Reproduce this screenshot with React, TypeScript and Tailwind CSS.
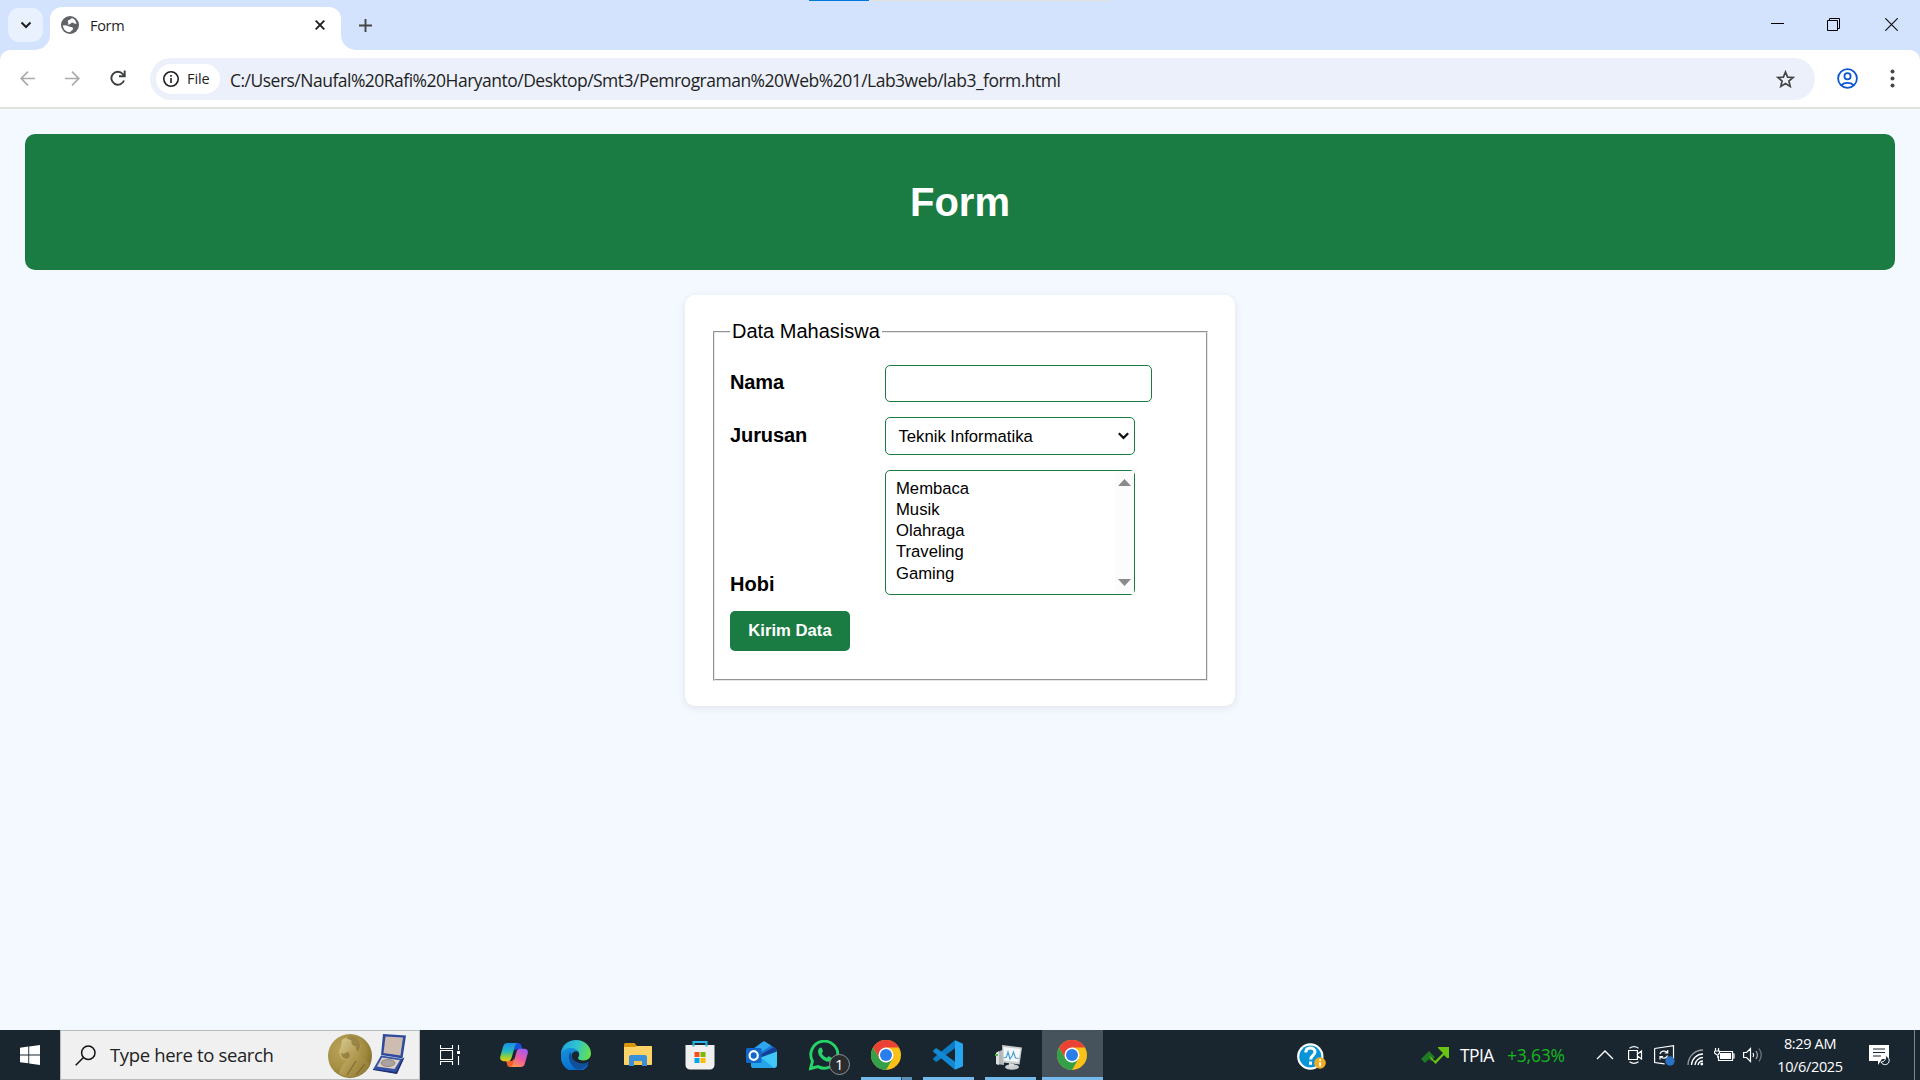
import type { ReactNode } from "react";

const hobbies = ["Membaca", "Musik", "Olahraga", "Traveling", "Gaming"];

function Globe() {
  return (
    <svg width="18" height="18" viewBox="0 0 18 18">
      <circle cx="9" cy="9" r="9" fill="#5f6368" />
      <path d="M2 9.300c1.800-.2 3.200-.1 4.500.5 1.400.6 2.200 1.300 3.400 1.200 1.500-.1 2.300.7 2.100 1.900-.2 1.300-1.300 1.400-2.200 2.300-.5.500-.8.900-1 1.100C5 16.200 2 13.200 2 9.300zM10.800 2.100c-.9.900-1.400 1.600-2.700 1.800-1.500.3-1.600 1.300-1 2.300.6 1 .3 1.700-.7 1.700 1.400 1 3 .6 3.600-.6.500-.9 1.500-.9 2.400-.2.700.6 1.700.9 3.200.6-.7-2.800-2.300-4.900-4.800-5.600z" fill="#fff" />
    </svg>
  );
}

function ChromeLogo() {
  return (
    <svg width="30" height="30" viewBox="0 0 30 30">
      <circle cx="15" cy="15" r="15" fill="#fbc116" />
      <path d="M2 7.500A15 15 0 0 1 28 7.500H15L8.500 18.750z" fill="#ea4335" />
      <path d="M2 7.500 8.500 18.750 15 22.500 21.500 18.750 15 30A15 15 0 0 1 2 7.500z" fill="#34a04a" />
      <circle cx="15" cy="15" r="7.500" fill="#fff" />
      <circle cx="15" cy="15" r="6" fill="#2b7de9" />
    </svg>
  );
}

function Copilot() {
  return (
    <svg width="28" height="26" viewBox="0 0 28 26">
      <defs>
        <linearGradient id="cpA" x1="0" y1="0" x2="0" y2="1">
          <stop offset="0" stopColor="#1c8fe8" />
          <stop offset="0.45" stopColor="#22b8c0" />
          <stop offset="0.75" stopColor="#8fcf3c" />
          <stop offset="1" stopColor="#f5c518" />
        </linearGradient>
        <linearGradient id="cpB" x1="0.7" y1="0" x2="0.2" y2="1">
          <stop offset="0" stopColor="#a55cf0" />
          <stop offset="0.5" stopColor="#ee5aa0" />
          <stop offset="1" stopColor="#ff9a4a" />
        </linearGradient>
      </defs>
      <path d="M14 1h4c2 0 3 1 3.500 3l1 3h-5c-1.500 0-2.500 1-3 2.500z" fill="#1b4fd8" />
      <path d="M14 25h-4c-2 0-2.700-1-3-3l-.8-3H11c1.500 0 2.500-1 3-2.500z" fill="#f4602c" />
      <path d="M7.500 1H18c-1.600 0-2.400 1.200-3 3l-3.500 12c-.6 2-1.500 3.200-3.500 3.200H3.500C.8 19.200-.4 17 .3 14.500L3.200 4.300C3.800 2.200 5.300 1 7.500 1z" fill="url(#cpA)" />
      <path d="M20.500 25H10c1.600 0 2.400-1.200 3-3l3.500-12c.6-2 1.500-3.200 3.500-3.200h4.500c2.700 0 3.900 2.200 3.200 4.700l-2.900 10.200c-.6 2.100-2.100 3.300-4.300 3.300z" fill="url(#cpB)" />
    </svg>
  );
}

function Edge() {
  return (
    <svg width="30" height="30" viewBox="0 0 30 30">
      <defs>
        <linearGradient id="egA" x1="0" y1="0.3" x2="1" y2="0.5">
          <stop offset="0" stopColor="#1fa5e0" />
          <stop offset="0.5" stopColor="#30c4d0" />
          <stop offset="1" stopColor="#66e04c" />
        </linearGradient>
        <linearGradient id="egB" x1="0" y1="0" x2="0.4" y2="1">
          <stop offset="0" stopColor="#1795dc" />
          <stop offset="1" stopColor="#0a6cd0" />
        </linearGradient>
      </defs>
      <path d="M0 13c0-3 4-6 9-6 4 0 7 2 8 5l-5 4c0 5 6 8 12 8l3.500 1A15 15 0 0 1 0 15z" fill="url(#egB)" />
      <path d="M9.500 11.500C7.500 14 7.500 18 9 22c2 4 5.500 7.500 8.500 7.800 4.300-.6 8-3.300 10-6.800.6-1-.1-1.500-.9-1-2 1-4 1.500-6.200 1.500C15 23.500 11 19 9.500 11.500z" fill="#104f99" />
      <path d="M10.800 15.500c0-2 1.400-4 4-4.200 2 .2 3.400 1.400 3.400 3.100 0 1.600-1.200 2.600-1.200 3.600 0 1.200 2 2.500 5.500 2.500 2 0 3.700-.6 5-1.600l-1 3c-2 .9-4 1.400-6 1.300-5.700-.2-9.700-3.700-9.700-7.700z" fill="#192630" />
      <path d="M0 13C1 5 7 0 15 0c8.500 0 15 6 15 13.500 0 4-3 7-7.500 7-3.500 0-5.500-1.300-5.500-2.500 0-.8 1.200-1.400 1.200-3.600C18.200 11 14.500 8 10 8 5.500 8 1.500 10 0 13z" fill="url(#egA)" />
    </svg>
  );
}

function Folder() {
  return (
    <svg width="28" height="24" viewBox="0 0 28 24">
      <path d="M0 1.500C0 .7.700 0 1.500 0h9l2.500 3v5H0z" fill="#d99408" />
      <path d="M0 4h11l2-1h14c.6 0 1 .4 1 1v17c0 .6-.4 1-1 1H1c-.6 0-1-.4-1-1z" fill="#fdd266" />
      <path d="M5 23V14c0-1.100.9-2 2-2h14c1.100 0 2 .9 2 2v9h-5v-5h-8v5z" fill="#3a8fd9" />
      <path d="M10 18h8v4h-8z" fill="#fbc94a" />
    </svg>
  );
}

function Store() {
  return (
    <svg width="30" height="30" viewBox="0 0 30 30">
      <path d="M.5 5h29v20a4.500 4.500 0 0 1-4.500 4.500H5A4.500 4.500 0 0 1 .5 25z" fill="#f0f0f0" />
      <path d="M8.500 6.500V2h13v4.500" fill="none" stroke="#29b4ee" strokeWidth="2" />
      <path d="M9.500 12h5v5h-5z" fill="#f25022" />
      <path d="M15.500 12h5v5h-5z" fill="#7fba00" />
      <path d="M9.500 18h5v5h-5z" fill="#00a4ef" />
      <path d="M15.500 18h5v5h-5z" fill="#ffb900" />
    </svg>
  );
}

function Outlook() {
  return (
    <svg width="31" height="28" viewBox="0 0 31 28">
      <path d="M5 9 16.500 1c.9-.6 2-.6 3 0L29 7c1.200.8 2 2 2 3v7L18 20 5 14z" fill="#1c78d4" />
      <path d="m8 8 8.500-7c.9-.6 2-.6 3 0L25 4.500 12 13z" fill="#2fa6ee" />
      <path d="m14 14 14-8c1.600.8 3 2.300 3 4.500L17 19z" fill="#123f98" />
      <path d="M5 20 31 10.500V24c0 1.700-1.300 3-3 3H8c-1.700 0-3-1.300-3-3z" fill="#3fc8f8" />
      <path d="M5 18h12l11 9H8c-1.700 0-3-1.300-3-3z" fill="#25a6ea" />
      <rect y="7" width="15.500" height="15" rx="1.500" fill="#1267cb" />
      <ellipse cx="7.700" cy="14.500" rx="4.100" ry="4.400" fill="none" stroke="#fff" strokeWidth="2.200" />
    </svg>
  );
}

function WhatsApp() {
  return (
    <svg width="42" height="36" viewBox="0 0 42 36">
      <path d="m1.500 28.500 2-7.300A13.500 13.500 0 1 1 9 26.600z" fill="none" stroke="#25d366" strokeWidth="2.900" />
      <path d="M10.500 8c.5-.6 1.800-.7 2.200.1l1.300 3c.2.600-1.300 1.900-1.100 2.400 1 2 2.600 3.400 4.800 4.300.6.100 1.600-1.700 2.200-1.500l3 1.500c.7.500-.1 2.700-1 3.300-1.600 1-4 .7-6-.3-3-1.500-5.500-4.200-6.500-7C8.700 11.500 9 9.300 10.500 8z" fill="#25d366" />
      <circle cx="30.500" cy="24.500" r="10" fill="#2a2d30" stroke="#8d9295" strokeWidth="1" />
      <text x="30.300" y="30" textAnchor="middle" fontSize="15" fill="#fff" fontFamily="Open Sans, sans-serif">1</text>
    </svg>
  );
}

function VsCode() {
  return (
    <svg width="30" height="30" viewBox="0 0 30 30">
      <path d="M22 .3v8L4 21.500c-.5.400-1 .4-1.500 0l-2-1.800c-.6-.5-.6-1.200 0-1.800z" fill="#0d7cc7" />
      <path d="M22 29.700v-8L4 8.500c-.5-.4-1-.4-1.500 0l-2 1.800c-.6.5-.6 1.200 0 1.800z" fill="#1389d4" />
      <path d="m22 .3 7 3c.6.300 1 .8 1 1.500v20.400c0 .7-.4 1.200-1 1.500l-7 3z" fill="#26a5f0" />
    </svg>
  );
}

function TaskManager() {
  return (
    <svg width="30" height="28" viewBox="0 0 30 28">
      <path d="m2 10 8-4v16l-8-1z" fill="#b4b7b8" />
      <path d="m2 10 3-2v14l-3-1z" fill="#dededc" />
      <path d="M1 11h3v2H1z" fill="#44bd3a" />
      <path d="m8 2 20 2.500-2.500 17L9 19.500z" fill="#c9cdcf" />
      <path d="m9.500 4 17 2-2.300 13L10 17.500z" fill="#f4f8fb" />
      <path d="m10 15 2.500-1 1.500-5 2 7 2-3 1.500-4 2 6 3 .5" fill="none" stroke="#4ba2d2" strokeWidth="1.200" />
      <ellipse cx="18" cy="24" rx="7" ry="2.800" fill="#c9cccd" />
      <path d="m15 20 5 .7v3h-5z" fill="#d8dadb" />
    </svg>
  );
}

function TaskSlot({ children, bar, active }: { children: ReactNode; bar?: "full" | "split"; active?: boolean }) {
  return (
    <div className={active ? "relative ml-px flex h-full w-[61px] items-center justify-center bg-[#47535c] pr-px" : "relative flex h-full w-[62px] items-center justify-center"}>
      {children}
      {bar === "full" && !active && <div className="absolute bottom-0 left-[6px] h-[3px] w-[51px] bg-[#76b9ed]" />}
      {bar === "split" && (
        <div className="absolute bottom-0 left-[6px] flex h-[3px] w-[51px]">
          <div className="w-10 bg-[#76b9ed]" />
          <div className="w-px bg-[#2c4a60]" />
          <div className="w-[10px] bg-[#5c8db4]" />
        </div>
      )}
      {active && <div className="absolute bottom-0 left-0 h-[3px] w-full bg-[#76b9ed]" />}
    </div>
  );
}

function TabStrip() {
  return (
    <div className="relative flex h-[50px] shrink-0 bg-[#d3e3fd]">
      <div className="absolute left-[809px] top-0 flex h-px w-[301px] bg-[#e3e3df]">
        <div className="w-[60px] bg-[#0078d7]" />
      </div>
      <div className="ml-2 mt-2 flex h-[34px] w-[35px] items-center justify-center rounded-[11px] bg-[#e9f0fe]">
        <svg width="12" height="8" viewBox="0 0 12 8" fill="none" stroke="#1f1f1f" strokeWidth="2"><path d="m1.500 1.500 4.500 4.500 4.500-4.500" /></svg>
      </div>
      <svg className="mt-auto ml-[-8px]" width="15" height="15" viewBox="0 0 15 15"><path d="M15 0v15H0A15 15 0 0 0 15 0z" fill="#fff" /></svg>
      <div className="mt-[7px] flex w-[291px] items-center rounded-t-[12px] bg-white pb-[7px] pl-[11px]">
        <Globe />
        <span className="ml-[11px] w-[226px] pt-px font-['Open_Sans'] text-[14.500px] tracking-[-0.300px] text-[#1f1f1f]">Form</span>
        <svg className="ml-[-1px]" width="10" height="10" viewBox="0 0 10 10" stroke="#1f1f1f" strokeWidth="1.900"><path d="m.7.7 8.600 8.600M9.300.7.7 9.300" /></svg>
      </div>
      <svg className="mt-auto" width="15" height="15" viewBox="0 0 15 15"><path d="M0 0v15h15A15 15 0 0 1 0 0z" fill="#fff" /></svg>
      <svg className="ml-[3px] mt-[19px]" width="13" height="13" viewBox="0 0 13 13" stroke="#444746" strokeWidth="1.900"><path d="M6.500 0v13M0 6.500h13" /></svg>
      <div className="ml-auto flex pt-[18px] pr-[22px]">
        <svg width="13" height="13" viewBox="0 0 13 13" stroke="#000"><path d="M0 5.500h13" /></svg>
        <svg className="ml-[43px]" width="13" height="13" viewBox="0 0 13 13" fill="none" stroke="#000"><path d="M.5 2.500h10v10H.5zM2.500 2.500v-2h10v10h-2" /></svg>
        <svg className="ml-[45px]" width="13" height="13" viewBox="0 0 13 13" stroke="#111" strokeWidth="1.200"><path d="m.3.300 12.400 12.400M12.700.3.300 12.700" /></svg>
      </div>
    </div>
  );
}

function Toolbar() {
  return (
    <div className="shrink-0 bg-[#d3e3fd]">
      <div className="flex h-[57px] items-start rounded-t-[10px] bg-white pt-2">
        <svg className="ml-5 mt-[13px]" width="15" height="15" viewBox="0 0 15 15" fill="none" stroke="#a9abab" strokeWidth="1.700"><path d="M15 7.500H1.500M8 .7 1.200 7.500 8 14.300" /></svg>
        <svg className="ml-[30px] mt-[13px]" width="15" height="15" viewBox="0 0 15 15" fill="none" stroke="#a9abab" strokeWidth="1.700"><path d="M0 7.500h13.500M7 .7l6.800 6.800L7 14.300" /></svg>
        <svg className="ml-[30px] mt-[12px]" width="16" height="17" viewBox="0 0 16 17" fill="none" stroke="#3c3f3f" strokeWidth="1.900"><path d="M14 10.500A6.500 6.500 0 1 1 12.800 4l1.700 2.300M14.700.5v5.800H9" /></svg>
        <div className="ml-[24px] flex h-[42px] w-[1665px] items-center rounded-full bg-[#ebf0fa] pl-[6px]">
          <div className="flex h-[30px] w-16 items-center rounded-full bg-white pl-[7px]">
            <svg width="16" height="16" viewBox="0 0 16 16"><circle cx="8" cy="8" r="7.200" fill="none" stroke="#1f1f1f" strokeWidth="1.600" /><path d="M7.200 7h1.600v5H7.200zM7.200 4h1.600v1.700H7.200z" fill="#1f1f1f" /></svg>
            <span className="ml-2 font-['Open_Sans'] text-[14.500px] font-medium tracking-[-0.100px] text-[#1f1f1f]">File</span>
          </div>
          <span className="ml-[10px] whitespace-nowrap pt-[2px] font-['Open_Sans'] text-[17.500px] tracking-[-0.510px] text-[#1f1f1f]">C:/Users/Naufal%20Rafi%20Haryanto/Desktop/Smt3/Pemrograman%20Web%201/Lab3web/lab3_form.html</span>
          <svg className="ml-auto mr-5" width="19" height="18" viewBox="0 0 19 18" fill="none" stroke="#444746" strokeWidth="1.700"><path d="m9.500 2 2.100 5.100 5.500.4-4.200 3.500 1.300 5.400-4.700-2.900-4.700 2.900 1.300-5.400L1.900 7.500l5.500-.4z" /></svg>
        </div>
        <svg className="ml-[22px] mt-[10px]" width="21" height="21" viewBox="0 0 21 21" fill="none" stroke="#0b57d0" strokeWidth="1.800"><circle cx="10.500" cy="10.500" r="9.400" /><circle cx="10.500" cy="8.300" r="3.100" /><path d="M4.200 17.200c3.500-3 9.100-3 12.600 0" /></svg>
        <svg className="ml-[32px] mt-[11px]" width="5" height="19" viewBox="0 0 5 19" fill="#444746"><circle cx="2.500" cy="2.500" r="2" /><circle cx="2.500" cy="9.500" r="2" /><circle cx="2.500" cy="16.500" r="2" /></svg>
      </div>
      <div className="h-[2px] bg-[#dfe1df]" />
    </div>
  );
}

function FormPage() {
  return (
    <main className="flex-1 bg-[#f4f9ff] px-[25px] pt-[25px] font-['Liberation_Sans'] text-black">
      <header className="flex h-[136px] items-center justify-center rounded-[10px] bg-[#1a7b43]">
        <h1 className="text-[40px] font-bold text-white">Form</h1>
      </header>
      <form className="mx-auto mt-[25px] h-[411px] w-[550px] rounded-[10px] bg-white px-[28px] pt-[25px] shadow-[0_2px_8px_rgba(0,0,0,0.09)]">
        <fieldset className="h-[361px] w-[495px] border-2 border-[#e7e7e7] px-[15px] [border-style:groove]">
          <legend className="px-[2px] text-[20px] leading-[23px]">Data Mahasiswa</legend>
          <div className="mt-[22px] flex items-center">
            <label className="w-[155px] pb-[3px] text-[20px] font-bold leading-6 tracking-[-0.100px]">Nama</label>
            <input className="h-[37px] w-[267px] rounded-[5px] border border-[#1a7b43] bg-white px-2" />
          </div>
          <div className="mt-[15px] flex items-center">
            <label className="w-[155px] pb-[3px] text-[20px] font-bold leading-6 tracking-[-0.100px]">Jurusan</label>
            <div className="flex h-[38px] w-[250px] items-center justify-between rounded-[5px] border border-[#1a7b43] pl-[12.500px] pr-[5px] text-[16.670px]">
              <span>Teknik Informatika</span>
              <svg width="11" height="8" viewBox="0 0 11 8" fill="none" stroke="#111" strokeWidth="2.200"><path d="m.8 1.200 4.700 4.700 4.700-4.700" /></svg>
            </div>
          </div>
          <div className="mt-[15px] flex items-end">
            <label className="w-[155px] text-[20px] font-bold leading-[21px]">Hobi</label>
            <div className="flex h-[125px] w-[250px] justify-between rounded-[5px] border border-[#1a7b43] pl-[10px] text-[16.670px]">
              <ul className="pt-[7px]">
                {hobbies.map((hobby) => (
                  <li key={hobby} className="h-[21px] leading-[21px] last:pt-px">{hobby}</li>
                ))}
              </ul>
              <div className="flex w-[19px] flex-col items-center justify-between bg-[#fcfcfc] py-2">
                <svg width="13" height="7" viewBox="0 0 13 7"><path d="M6.500 0 13 7H0z" fill="#8b8b8b" /></svg>
                <svg width="13" height="7" viewBox="0 0 13 7"><path d="M6.500 7 13 0H0z" fill="#8b8b8b" /></svg>
              </div>
            </div>
          </div>
          <button type="button" className="mt-4 block h-10 w-[120px] rounded-[5px] bg-[#1a7b43] pb-[2px] text-[16.670px] font-bold text-white">Kirim Data</button>
        </fieldset>
      </form>
    </main>
  );
}

function Taskbar() {
  return (
    <div className="flex h-[50px] shrink-0 bg-[#192630] font-['Open_Sans'] text-white">
      <div className="flex w-[60px] items-center justify-center">
        <svg width="20" height="20" viewBox="0 0 20 20" fill="#fff"><path d="m0 2.800 8.300-1.200v7.900H0zM9.200 1.400 20 0v9.500H9.200zM0 10.400h8.300v7.900L0 17.200zM9.200 10.400H20V20L9.200 18.500z" /></svg>
      </div>
      <div className="flex w-[360px] items-center border border-[#b9bcbf] bg-[#f0f0f0]">
        <svg className="ml-[14px]" width="21" height="21" viewBox="0 0 21 21" fill="none" stroke="#111" strokeWidth="1.500"><circle cx="13.300" cy="7.700" r="6.700" /><path d="M8.500 12.500.7 20.300" /></svg>
        <span className="ml-[14px] w-[217px] whitespace-nowrap text-[18.500px] tracking-[-0.350px] text-[#222]">Type here to search</span>
        <svg className="shrink-0" width="80" height="46" viewBox="0 0 80 46">
          <defs>
            <radialGradient id="medal" cx="0.35" cy="0.35" r="0.8">
              <stop offset="0" stopColor="#bba65a" />
              <stop offset="0.6" stopColor="#a38d42" />
              <stop offset="1" stopColor="#766222" />
            </radialGradient>
            <linearGradient id="bust" x1="0" y1="0" x2="1" y2="1">
              <stop offset="0" stopColor="#d9cb92" />
              <stop offset="0.5" stopColor="#b09a50" />
              <stop offset="1" stopColor="#8a7430" />
            </linearGradient>
          </defs>
          <circle cx="23" cy="24" r="22" fill="url(#medal)" />
          <path d="M15 8c4-4 12-4 16-.5 3.500 3.500 3.500 8.500 1 13l.5 5c5 1.500 8.500 4 10.500 8-4 7-11 11.500-19 11.500-4.500 0-8.500-1.300-12-3.500 1.500-5.500 4-9.500 8-13.500-3 .5-6-.5-6.500-3.500l-1.500-4.500 2-5.500z" fill="url(#bust)" />
          <path d="M19 6c5-2.500 10-1.500 12.500 2s2 8.500-.5 11.500c-2-1-2.500-3-2-5.500-3.500.5-5-2.500-4.500-5.500z" fill="#8d783a" opacity=".75" />
          <path d="M14 21c2.500 1.500 5 .5 7-1.500 2 2 2.500 4.500.5 6.500-3 1.500-7 0-7.500-5z" fill="#8f7935" opacity=".8" />
          <path d="M29 29 20 43M38 32l-9 11" stroke="#6b571c" strokeWidth="1.100" fill="none" opacity=".7" />
          <path d="m56 2 23 1.500-3.500 23L54 23z" fill="#2d4a9c" />
          <path d="m58.500 4.500 17.500 1-2.500 18-17-2.500z" fill="#cfbcb0" />
          <path d="m54 23.500 22 3.500-7 14.500-23-4z" fill="#3553a6" />
          <path d="m55 25.500 18 2.800-5.500 8.700-17.500-2.500z" fill="#dfd0c4" />
          <ellipse cx="61" cy="31" rx="7" ry="3.500" fill="#aaa39f" stroke="#7a7471" strokeWidth=".7" />
          <path d="m75.500 26.500 2-1L70 42l-24-4v-1l23 3z" fill="#1e2f74" />
        </svg>
      </div>
      <div className="ml-px flex">
        <TaskSlot>
          <svg className="mr-1" width="20" height="20" viewBox="0 0 20 20" fill="none" stroke="#fff" strokeWidth="1.100"><path d="M.5 0v3.500h12V0M.5 5.500h12v9H.5zM.5 20v-3.500h12V20M18.500 0v5M18.500 11v9" /><path d="M17 6h3v3h-3z" fill="#fff" stroke="none" /></svg>
        </TaskSlot>
        <TaskSlot><Copilot /></TaskSlot>
        <TaskSlot><Edge /></TaskSlot>
        <TaskSlot><Folder /></TaskSlot>
        <TaskSlot><span className="mr-px"><Store /></span></TaskSlot>
        <TaskSlot><span className="mr-[2px]"><Outlook /></span></TaskSlot>
        <TaskSlot><span className="ml-[12px] mt-[6px]"><WhatsApp /></span></TaskSlot>
        <TaskSlot bar="split"><ChromeLogo /></TaskSlot>
        <TaskSlot bar="full"><VsCode /></TaskSlot>
        <TaskSlot bar="full"><span className="mr-[2px] mt-1"><TaskManager /></span></TaskSlot>
        <TaskSlot active><ChromeLogo /></TaskSlot>
      </div>
      <div className="ml-auto flex items-center">
        <svg className="mt-1" width="30" height="28" viewBox="0 0 30 28">
          <circle cx="13.300" cy="13.500" r="13.200" fill="#fff" />
          <circle cx="13.300" cy="13.500" r="11" fill="#0795d8" />
          <path d="M8.800 9.500c0-3 2-4.500 4.600-4.500s4.600 1.500 4.600 4c0 3.300-4.300 3.600-4.300 7.500M13.500 18.500v3.300" fill="none" stroke="#fff" strokeWidth="3" />
          <circle cx="23" cy="20" r="5.800" fill="#f3ad22" />
          <path d="M22.200 19h1.800v4.500h-1.800zM22.200 16h1.800v1.800h-1.800z" fill="#fff" />
        </svg>
        <svg className="ml-[94px]" width="28" height="17" viewBox="0 0 28 17">
          <path d="m0 12 8-8 6 6-4 4-2-2-4 4z" fill="#207a24" />
          <path d="m8 8 6 6 8-8-5-5V0h11v11h-2l-3-3-8.500 9L10 12z" fill="#69c413" />
        </svg>
        <span className="ml-[11px] w-[47px] text-[17.500px] tracking-[-0.600px]">TPIA</span>
        <span className="w-[89px] text-[17.500px] tracking-[-0.200px] text-[#14b81c]">+3,63%</span>
        <svg width="18" height="10" viewBox="0 0 18 10" fill="none" stroke="#fff" strokeWidth="1.400"><path d="m1 9 8-8 8 8" /></svg>
        <svg className="ml-[14px]" width="15" height="20" viewBox="0 0 15 20" fill="none" stroke="#fff" strokeWidth="1.200"><path d="M.6 5.500h8.800v9H.6zM9.500 9l4-3v8l-4-3M1.500 3.200Q6 .2 10.500 3.200M1.500 16.800q4.500 3 9 0" /></svg>
        <svg className="ml-[11px]" width="21" height="21" viewBox="0 0 21 21" fill="none" stroke="#fff" strokeWidth="1.200"><path d="M.6 3.500 19.500.7v13M.6 3.500v14l10 1.300M6 9c.8-3 5-4 7.500-1.500M13.700 5v3h-3M13.500 10.500c-1 3-5 3.500-7 1.200M6 14.500v-3h3" /><circle cx="16" cy="16" r="4.700" fill="#2a72c3" stroke="none" /></svg>
        <svg className="ml-[12px] mt-1" width="17" height="17" viewBox="0 0 17 17" fill="none" stroke="#fff" strokeWidth="1.300"><path d="M1 16A15 15 0 0 1 16 1" stroke="#9aa2a7" /><path d="M4.500 16A11.500 11.500 0 0 1 16 5M8 16a8 8 0 0 1 8-7.500M11 16a5 5 0 0 1 5-4" /><circle cx="14.800" cy="15" r="1.400" fill="#fff" stroke="none" /></svg>
        <svg className="ml-[10px]" width="21" height="15" viewBox="0 0 21 15" fill="none" stroke="#fff" strokeWidth="1.200"><path d="M5 3.500h13.500v9H4.500V8M18.500 6H20v4h-1.500" /><path d="M6 5h11v6H6z" fill="#fff" stroke="none" /><path d="M1.500 0v3M4.500 0v3M.5 3h5v2L3.800 7v3M.5 3v2L3 7" /></svg>
        <svg className="ml-[8px]" width="21" height="16" viewBox="0 0 21 16" fill="none" stroke="#fff" strokeWidth="1.200"><path d="M.6 5.500h3L7.500 1.500v13l-3.900-4h-3zM10 6q1.300 2 0 4" /><path d="M13 4q2.800 4 0 8" stroke="#a9b0b4" /><path d="M16 1.500q4.500 6.500 0 13" stroke="#737c83" /></svg>
        <div className="ml-[11px] flex w-[70px] flex-col items-center whitespace-nowrap pb-px text-[14.500px] leading-[23px] tracking-[-0.350px]">
          <span>8:29 AM</span>
          <span>10/6/2025</span>
        </div>
        <svg className="ml-[24px]" width="21" height="21" viewBox="0 0 21 21"><path d="M0 0h20v14h-7l-4 6v-4H0z" fill="#fff" /><path d="M4 4h12M4 7.500h12M4 11h8" stroke="#192630" strokeWidth="1.200" /><path d="M16.500 10.500c1 4-1.500 6.500-4.500 6.500 1.500 4 8.500 3.500 8.200-2-.3-2-1.700-4-3.700-4.500z" fill="#192630" stroke="#fff" /></svg>
        <div className="ml-[24px] mr-[5px] h-[50px] w-px bg-[#7d868c]" />
      </div>
    </div>
  );
}

export default function App() {
  return (
    <div className="flex h-[1080px] w-[1920px] flex-col overflow-hidden">
      <TabStrip />
      <Toolbar />
      <FormPage />
      <Taskbar />
    </div>
  );
}
